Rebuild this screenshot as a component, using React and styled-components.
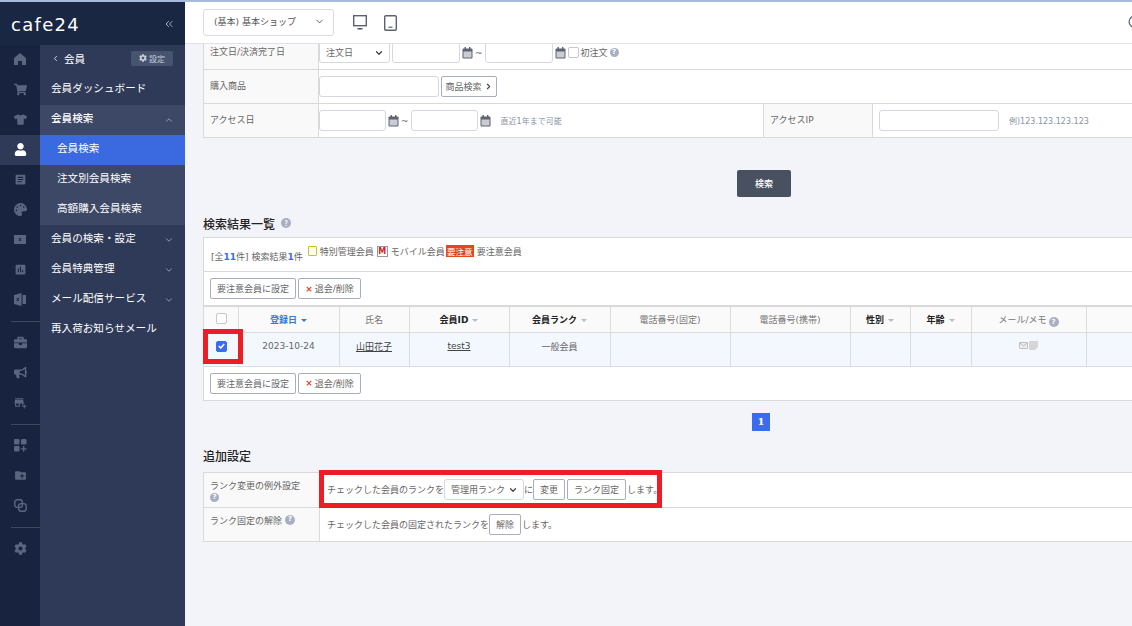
import styled, { createGlobalStyle } from 'styled-components';
import { FaBriefcase, FaBullhorn, FaCog, FaPalette, FaShoppingCart, FaTshirt, FaUser } from 'react-icons/fa';
import { MdAddBusiness, MdArticle, MdCreateNewFolder, MdInsertChart } from 'react-icons/md';
import { LuChevronDown, LuChevronLeft, LuChevronRight, LuChevronUp, LuChevronsLeft, LuSearch } from 'react-icons/lu';

const GlobalStyle = createGlobalStyle`
  html, body { margin: 0; padding: 0; }
  body {
    font-family: "DejaVu Sans", "Noto Sans CJK JP", sans-serif;
    font-size: 9px;
    color: #666;
    background: #f3f4f9;
  }
  * { box-sizing: border-box; }
`;

const Page = styled.div`
  width: 1132px;
  height: 626px;
  overflow: hidden;
  display: flex;
  flex-direction: column;
`;
const TopLine = styled.div`
  height: 2px;
  flex: none;
  background: #a9bbdd;
`;
const Body = styled.div`
  flex: 1;
  display: flex;
  min-height: 0;
`;
const Sidebar = styled.aside`
  width: 185px;
  flex: none;
  display: flex;
  flex-direction: column;
  background: #17233f;
`;
const LogoBar = styled.div`
  height: 43px;
  flex: none;
  display: flex;
  align-items: center;
  justify-content: space-between;
  padding: 0 10px 0 11px;
  color: #fff;
  background: #1a2743;
`;
const Logo = styled.span`
  font-family: "DejaVu Sans", sans-serif;
  font-size: 18px;
  line-height: 1;
  letter-spacing: 1.3px;
  margin-top: 2px;
`;
const Collapse = styled.span`
  display: flex;
  color: #aeb6c6;
  font-size: 12px;
`;
const SideBody = styled.div`
  flex: 1;
  display: flex;
`;
const Rail = styled.nav`
  width: 40px;
  flex: none;
`;
const RailItem = styled.div`
  height: 30px;
  display: flex;
  align-items: center;
  justify-content: center;
  padding-bottom: 2px;
  font-size: 13px;
  color: ${p => (p.$active ? '#fff' : '#5b6580')};
  background: ${p => (p.$active ? '#2e3a58' : 'transparent')};
`;
const RailDivider = styled.div`
  height: 13px;
  display: flex;
  align-items: center;
  padding-left: 11px;
  &::after {
    content: '';
    flex: 1;
    height: 1px;
    background: #3c4762;
  }
`;
const Panel = styled.div`
  width: 145px;
  flex: none;
  background: #2e3a58;
  color: #fff;
  font-family: "Noto Sans CJK JP", sans-serif;
  font-size: 10.6px;
`;
const PanelHead = styled.div`
  height: 30px;
  display: flex;
  align-items: center;
  padding: 0 12px 4px 11px;
  gap: 4px;
`;
const SettingButton = styled.span`
  margin-left: auto;
  height: 15px;
  width: 42px;
  display: flex;
  align-items: center;
  justify-content: center;
  gap: 2px;
  font-size: 8px;
  color: #c5cbd8;
  background: #47546f;
  border-radius: 2px;
`;
const MenuGroup = styled.div`
  background: #3c4866;
`;
const MenuItem = styled.div`
  height: 30px;
  display: flex;
  align-items: center;
  justify-content: space-between;
  padding: 0 11px 6px ${p => (p.$sub ? '17px' : '11px')};
  font-weight: ${p => (p.$bold ? 500 : 400)};
  background: ${p => (p.$selected ? '#3b69e0' : 'transparent')};
  svg { color: #a5adbf; font-size: 10px; margin-top: 6px; }
`;

const Main = styled.main`
  flex: 1;
  min-width: 0;
  overflow: hidden;
  display: flex;
  flex-direction: column;
`;
const Header = styled.header`
  height: 42px;
  flex: none;
  display: flex;
  align-items: center;
  padding-left: 18px;
  background: #fff;
  border-bottom: 1px solid #e2e2e2;
  position: relative;
  z-index: 2;
`;
const ShopSelect = styled.div`
  width: 131px;
  height: 27px;
  display: flex;
  align-items: center;
  justify-content: space-between;
  padding: 0 8px 2px 10px;
  border: 1px solid #d9dce3;
  border-radius: 3px;
  font-size: 9px;
  color: #555;
  svg { font-size: 11px; color: #555; }
`;
const DeviceIcon = styled.svg`
  flex: none;
  margin-left: ${p => p.$gap}px;
  color: #5a6270;
`;
const HeaderSearch = styled.span`
  display: flex;
  margin-left: auto;
  margin-right: -12px;
  color: #6b7280;
  font-size: 17px;
`;
const Scroll = styled.div`
  width: 1122px;
  margin: -8px 0 0 18px;
`;

const Box = styled.div`
  background: #fff;
  border: 1px solid #d9d9d9;
  border-top: ${p => (p.$noTop ? '0' : '1px solid #d9d9d9')};
`;
const FormRow = styled.div`
  height: ${p => p.$h || 34}px;
  display: flex;
  border-bottom: ${p => (p.$last ? '0' : '1px solid #d9d9d9')};
`;
const Label = styled.div`
  width: ${p => p.$w || 115}px;
  flex: none;
  padding: ${p => p.$pad || '0 6px'};
  display: flex;
  align-items: ${p => (p.$top ? 'flex-start' : 'center')};
  align-content: ${p => (p.$top ? 'flex-start' : 'center')};
  flex-wrap: wrap;
  gap: 0 3px;
  line-height: 13px;
  background: #f9f9f9;
  border-right: 1px solid #d9d9d9;
  border-left: ${p => (p.$divided ? '1px solid #d9d9d9' : '0')};
  color: #666;
`;
const Field = styled.div`
  display: flex;
  align-items: center;
  gap: ${p => p.$gap ?? 2}px;
  padding: 0 0 0 ${p => p.$pl ?? 0}px;
  width: ${p => p.$w || 'auto'};
  flex: ${p => (p.$w ? 'none' : 1)};
`;
const Input = styled.div`
  width: ${p => p.$w}px;
  height: 21px;
  flex: none;
  background: #fff;
  border: 1px solid #d5d8df;
  border-radius: 3px;
`;
const SelectBox = styled.div`
  width: ${p => p.$w}px;
  height: 21px;
  flex: none;
  display: flex;
  align-items: center;
  justify-content: space-between;
  padding: 0 5px 0 6px;
  background: #fff;
  border: 1px solid #d5d8df;
  border-radius: 3px;
  color: #666;
  svg { font-size: 10px; color: #444; stroke-width: 3; }
`;
const Button = styled.button`
  height: 21px;
  flex: none;
  display: inline-flex;
  align-items: center;
  justify-content: center;
  gap: 2px;
  padding: 0;
  width: ${p => p.$w}px;
  margin: 0 ${p => p.$mr || 0}px 0 0;
  font: inherit;
  color: #666;
  background: #fff;
  border: 1px solid #a9aebd;
  border-radius: 2px;
  svg { font-size: 9px; color: #444; stroke-width: 3; }
`;
const CheckBox = styled.span`
  width: 11px;
  height: 11px;
  flex: none;
  display: inline-flex;
  align-items: center;
  justify-content: center;
  background: ${p => (p.$on ? '#3a6cf0' : '#fff')};
  border: 1px solid ${p => (p.$on ? '#3a6cf0' : '#c4c7cf')};
  border-radius: 2px;
`;
const Help = styled.span`
  width: ${p => p.$s || 9}px;
  height: ${p => p.$s || 9}px;
  flex: none;
  display: inline-flex;
  align-items: center;
  justify-content: center;
  border-radius: 50%;
  background: #a9afc3;
  color: #fff;
  font-size: 7px;
  font-weight: 700;
  line-height: 1;
`;
const Note = styled.span`
  font-size: 8px;
  color: #8a93a3;
  margin-left: ${p => p.$ml || 0}px;
`;
const SearchRow = styled.div`
  display: flex;
  justify-content: center;
  margin: 32px 0 0;
`;
const SearchButton = styled.button`
  width: 54px;
  height: 27px;
  padding: 0;
  font: inherit;
  font-weight: 500;
  color: #fff;
  background: #495060;
  border: 0;
  border-radius: 2px;
`;
const Title = styled.h2`
  display: flex;
  align-items: center;
  gap: 6px;
  margin: ${p => p.$m};
  height: 18px;
  font-family: "Noto Sans CJK JP", sans-serif;
  font-size: 12px;
  font-weight: 500;
  color: #222;
`;
const SummaryRow = styled.div`
  height: 34px;
  display: flex;
  padding: 0 7px;
  border-bottom: 1px solid #d9d9d9;
`;
const Summary = styled.span`
  margin-top: 12px;
  white-space: nowrap;
  b { color: #3a6cf0; font-weight: 700; }
`;
const Legend = styled.div`
  display: flex;
  align-items: center;
  height: 12px;
  margin: 7px 0 0 5px;
  gap: 3px;
  white-space: nowrap;
`;
const YellowMark = styled.span`
  width: 9px;
  height: 10px;
  border: 1px solid #d9b92c;
  background: #fffef2;
  border-radius: 1px;
`;
const MobileMark = styled.span`
  width: 11px;
  height: 11px;
  display: inline-flex;
  align-items: center;
  justify-content: center;
  border: 1px solid #999;
  color: #d92020;
  font-size: 8px;
  font-weight: 700;
  background: #fff;
`;
const WarnMark = styled.span`
  width: 28px;
  height: 12px;
  margin-left: -2px;
  display: inline-flex;
  align-items: center;
  justify-content: center;
  font-size: 8.5px;
  color: #fff;
  background: #e0481f;
`;
const ActionRow = styled.div`
  height: ${p => p.$h}px;
  display: flex;
  align-items: flex-start;
  gap: 2px;
  padding: 6px 6px 0;
  border-bottom: ${p => (p.$line ? '2px solid #d9d9d9' : '0')};
`;
const DangerX = styled.span`
  color: #e0481f;
  font-weight: 700;
`;
const ResultTable = styled.table`
  width: 100%;
  table-layout: fixed;
  border-collapse: collapse;
`;
const Th = styled.th`
  height: 25px;
  padding: 1px 0 0;
  font-weight: ${p => (p.$bold || p.$blue ? 700 : 400)};
  color: ${p => (p.$blue ? '#2f7bd8' : p.$bold ? '#222' : '#777')};
  background: #fafafa;
  border: 1px solid #dcdcdc;
  border-top: 0;
  &:first-child { border-left: 0; padding-left: 1px; }
`;
const Td = styled.td`
  height: 34px;
  padding: 0 0 6px;
  text-align: center;
  color: #666;
  background: #f3f8fe;
  border: 1px solid #dcdcdc;
  &:first-child { border-left: 0; padding-left: 1px; }
`;
const Caret = styled.span`
  display: inline-block;
  margin-left: 4px;
  vertical-align: 1px;
  border-left: 3px solid transparent;
  border-right: 3px solid transparent;
  border-top: 3px solid ${p => (p.$blue ? '#2f7bd8' : '#bbb')};
`;
const HeadHelp = styled(Help)`
  margin-left: 2px;
  vertical-align: -1px;
`;
const UserLink = styled.span`
  color: #444;
  text-decoration: underline;
`;
const CellIcons = styled.span`
  display: inline-flex;
  gap: 1px;
  align-items: center;
`;
const Pager = styled.div`
  display: flex;
  justify-content: center;
  padding-right: 6px;
  margin-top: 12px;
`;
const PageNumber = styled.span`
  width: 18px;
  height: 18px;
  display: flex;
  align-items: center;
  justify-content: center;
  font-family: "DejaVu Serif", serif;
  font-size: 10px;
  font-weight: 700;
  color: #fff;
  background: #3a6cf0;
`;
const RedFrame = styled.div`
  position: absolute;
  pointer-events: none;
  left: ${p => p.$x}px;
  top: ${p => p.$y}px;
  width: ${p => p.$w}px;
  height: ${p => p.$h}px;
  border: 5px solid #ee1c25;
  z-index: 3;
`;
const Overlay = styled.div`
  position: relative;
  height: 0;
`;

const CalendarIcon = () => (
  <svg width="11" height="12" viewBox="0 0 11 12" style={{ flex: 'none' }}>
    <rect x="0.5" y="1.5" width="10" height="10" rx="1" fill="#5d6470" />
    <rect x="1.5" y="4.5" width="8" height="6" fill="#c9ccd2" />
    <rect x="2.5" y="0" width="1.4" height="3" fill="#5d6470" />
    <rect x="7" y="0" width="1.4" height="3" fill="#5d6470" />
  </svg>
);

const HomeIcon = () => (
  <svg width="12" height="12" viewBox="0 0 12 12" fill="currentColor">
    <path d="M6 0l6 5v7H8V8H4v4H0V5z" />
  </svg>
);

const GridPlusIcon = () => (
  <svg width="13" height="13" viewBox="0 0 13 13" fill="currentColor">
    <rect x="0" y="0" width="5.5" height="5.5" rx="1.2" />
    <rect x="7" y="0" width="5.5" height="5.5" rx="1.2" />
    <rect x="0" y="7" width="5.5" height="5.5" rx="1.2" />
    <path d="M9 7h1.4v2.2h2.2v1.4h-2.2v2.2H9v-2.2H6.9V9.2H9z" />
  </svg>
);

const CopyLinkIcon = () => (
  <svg width="13" height="13" viewBox="0 0 13 13" fill="none" stroke="currentColor" strokeWidth="1.4">
    <rect x="0.8" y="0.8" width="7.6" height="7.6" rx="2.4" />
    <rect x="4.6" y="4.6" width="7.6" height="7.6" rx="2.4" />
  </svg>
);

const TicketIcon = () => (
  <svg width="12" height="9" viewBox="0 0 12 9">
    <rect width="12" height="9" fill="currentColor" />
    <path d="M4.8 3l2.4 3M7.2 3L4.8 6" stroke="#17233f" strokeWidth="1" />
  </svg>
);

const ExcelBookIcon = () => (
  <svg width="12" height="13" viewBox="0 0 12 13">
    <path d="M0 2l7.5-2v13L0 11z" fill="currentColor" />
    <path d="M8.5 2H12v9H8.5z" fill="currentColor" />
    <path d="M2.6 5l2.2 3M4.8 5L2.6 8" stroke="#17233f" strokeWidth="1" />
  </svg>
);

const MailMemoIcons = () => (
  <CellIcons>
    <svg width="9" height="7" viewBox="0 0 9 7" fill="none" stroke="#aaa" strokeWidth="0.8">
      <rect x="0.4" y="0.4" width="8.2" height="6.2" rx="1" fill="#eee" />
      <path d="M0.6 0.8L4.5 4l3.9-3.2" />
    </svg>
    <svg width="9" height="9" viewBox="0 0 9 9">
      <path d="M0 0h9v6L6 9H0z" fill="#d6d6d6" />
    </svg>
  </CellIcons>
);

const WhiteCheck = () => (
  <svg width="7" height="6" viewBox="0 0 7 6" fill="none" stroke="#fff" strokeWidth="1.6">
    <path d="M0.8 3l2 2L6.2 1" />
  </svg>
);

const railTop = [
  [<HomeIcon />], [<FaShoppingCart />], [<FaTshirt />], [<FaUser />, true], [<MdArticle />],
  [<FaPalette />], [<TicketIcon />], [<MdInsertChart />], [<ExcelBookIcon />],
];
const railMiddle = [<FaBriefcase />, <FaBullhorn />, <MdAddBusiness />];
const railBottom = [<GridPlusIcon />, <MdCreateNewFolder />, <CopyLinkIcon />];

const columns = [34, 101, 70, 100, 101, 120, 120, 60, 61, 115];

function ActionButtons() {
  return (
    <>
      <Button $w={86}>要注意会員に設定</Button>
      <Button $w={63}><DangerX>×</DangerX>退会/削除</Button>
    </>
  );
}

function App() {
  return (
    <Page>
      <GlobalStyle />
      <TopLine />
      <Body>
        <Sidebar>
          <LogoBar>
            <Logo>cafe24</Logo>
            <Collapse><LuChevronsLeft /></Collapse>
          </LogoBar>
          <SideBody>
            <Rail>
              {railTop.map(([icon, active], i) => (
                <RailItem key={i} $active={active}>{icon}</RailItem>
              ))}
              <RailDivider />
              {railMiddle.map((icon, i) => <RailItem key={i}>{icon}</RailItem>)}
              <RailDivider />
              {railBottom.map((icon, i) => <RailItem key={i}>{icon}</RailItem>)}
              <RailDivider />
              <RailItem><FaCog /></RailItem>
            </Rail>
            <Panel>
              <PanelHead>
                <LuChevronLeft size={9} />
                <span>会員</span>
                <SettingButton><FaCog size={8} />設定</SettingButton>
              </PanelHead>
              <MenuItem>会員ダッシュボード</MenuItem>
              <MenuGroup>
                <MenuItem $bold>会員検索<LuChevronUp /></MenuItem>
                <MenuItem $sub $selected>会員検索</MenuItem>
                <MenuItem $sub>注文別会員検索</MenuItem>
                <MenuItem $sub>高額購入会員検索</MenuItem>
              </MenuGroup>
              <MenuItem>会員の検索・設定<LuChevronDown /></MenuItem>
              <MenuItem>会員特典管理<LuChevronDown /></MenuItem>
              <MenuItem>メール配信サービス<LuChevronDown /></MenuItem>
              <MenuItem>再入荷お知らせメール</MenuItem>
            </Panel>
          </SideBody>
        </Sidebar>
        <Main>
          <Header>
            <ShopSelect>(基本) 基本ショップ<LuChevronDown /></ShopSelect>
            <DeviceIcon $gap={19} width="14" height="15" viewBox="0 0 14 15" fill="none" stroke="currentColor" strokeWidth="1.4">
              <rect x="0.7" y="0.7" width="12.6" height="10" />
              <path d="M4.5 13.8h5" strokeWidth="1.6" />
            </DeviceIcon>
            <DeviceIcon $gap={17} width="13" height="16" viewBox="0 0 13 16" fill="none" stroke="currentColor" strokeWidth="1.4">
              <rect x="0.7" y="0.7" width="11.6" height="14.6" rx="1.2" />
              <path d="M4.5 12.2h4" strokeWidth="1.2" />
            </DeviceIcon>
            <HeaderSearch><LuSearch /></HeaderSearch>
          </Header>
          <Scroll>
            <Box $noTop>
              <FormRow>
                <Label>注文日/決済完了日</Label>
                <Field>
                  <SelectBox $w={71}>注文日<LuChevronDown /></SelectBox>
                  <Input $w={68} />
                  <CalendarIcon />
                  <span>~</span>
                  <Input $w={68} />
                  <CalendarIcon />
                  <CheckBox />
                  <span>初注文</span>
                  <Help>?</Help>
                </Field>
              </FormRow>
              <FormRow>
                <Label>購入商品</Label>
                <Field>
                  <Input $w={120} />
                  <Button $w={56}>商品検索<LuChevronRight /></Button>
                </Field>
              </FormRow>
              <FormRow $h={33} $last>
                <Label>アクセス日</Label>
                <Field $w="444px">
                  <Input $w={67} />
                  <CalendarIcon />
                  <span>~</span>
                  <Input $w={67} />
                  <CalendarIcon />
                  <Note $ml={8}>直近1年まで可能</Note>
                </Field>
                <Label $w={110} $divided>アクセスIP</Label>
                <Field $pl={6}>
                  <Input $w={120} />
                  <Note $ml={8}>例)123.123.123.123</Note>
                </Field>
              </FormRow>
            </Box>
            <SearchRow><SearchButton>検索</SearchButton></SearchRow>
            <Title $m="17px 0 5px">検索結果一覧<Help $s={10}>?</Help></Title>
            <Overlay><RedFrame $x={0} $y={92} $w={40} $h={35} /></Overlay>
            <Box>
              <SummaryRow>
                <Summary>[全<b>11</b>件] 検索結果<b>1</b>件</Summary>
                <Legend>
                  <YellowMark />特別管理会員
                  <MobileMark>M</MobileMark>モバイル会員
                  <WarnMark>要注意</WarnMark>要注意会員
                </Legend>
              </SummaryRow>
              <ActionRow $h={35} $line><ActionButtons /></ActionRow>
              <ResultTable>
                <colgroup>
                  {columns.map((w, i) => <col key={i} style={{ width: w }} />)}
                  <col />
                </colgroup>
                <thead>
                  <tr>
                    <Th><CheckBox /></Th>
                    <Th $blue>登録日<Caret $blue /></Th>
                    <Th>氏名</Th>
                    <Th $bold>会員ID<Caret /></Th>
                    <Th $bold>会員ランク<Caret /></Th>
                    <Th>電話番号(固定)</Th>
                    <Th>電話番号(携帯)</Th>
                    <Th $bold>性別<Caret /></Th>
                    <Th $bold>年齢<Caret /></Th>
                    <Th>メール/メモ<HeadHelp $s={10}>?</HeadHelp></Th>
                    <Th />
                  </tr>
                </thead>
                <tbody>
                  <tr>
                    <Td><CheckBox $on><WhiteCheck /></CheckBox></Td>
                    <Td>2023-10-24</Td>
                    <Td><UserLink>山田花子</UserLink></Td>
                    <Td><UserLink>test3</UserLink></Td>
                    <Td>一般会員</Td>
                    <Td />
                    <Td />
                    <Td />
                    <Td />
                    <Td><MailMemoIcons /></Td>
                    <Td />
                  </tr>
                </tbody>
              </ResultTable>
              <ActionRow $h={33}><ActionButtons /></ActionRow>
            </Box>
            <Pager><PageNumber>1</PageNumber></Pager>
            <Title $m="16px 0 7px">追加設定</Title>
            <Overlay><RedFrame $x={116} $y={-2} $w={343} $h={38} /></Overlay>
            <Box>
              <FormRow $h={35}>
                <Label $w={116} $pad="7px 14px 0 6px" $top>
                  <span>ランク変更の例外設定</span>
                  <Help>?</Help>
                </Label>
                <Field $pl={7} $gap={0}>
                  チェックした会員のランクを
                  <SelectBox $w={80}>管理用ランク<LuChevronDown /></SelectBox>
                  に
                  <Button $w={32} $mr={2}>変更</Button>
                  <Button $w={59} $mr={1}>ランク固定</Button>
                  します。
                </Field>
              </FormRow>
              <FormRow $h={33} $last>
                <Label $w={116} $pad="7px 6px 0" $top>
                  <span>ランク固定の解除</span>
                  <Help $s={10}>?</Help>
                </Label>
                <Field $pl={7} $gap={0}>
                  チェックした会員の固定されたランクを
                  <Button $w={32} $mr={1}>解除</Button>
                  します。
                </Field>
              </FormRow>
            </Box>
          </Scroll>
        </Main>
      </Body>
    </Page>
  );
}

export default App;
